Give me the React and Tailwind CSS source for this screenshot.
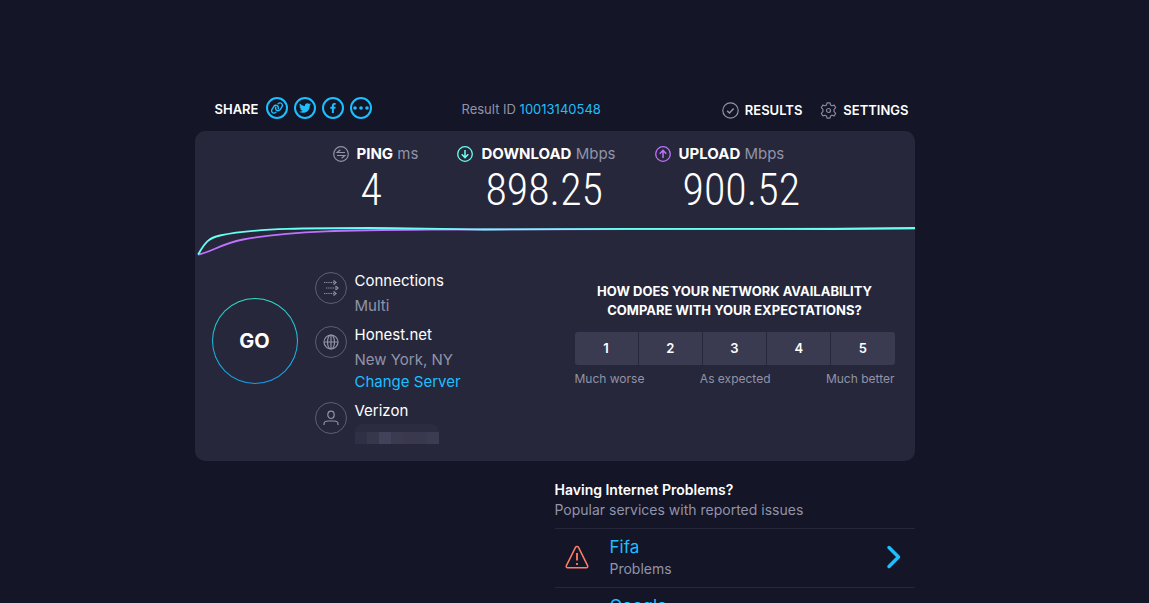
import React from 'react';
import { FaTwitter, FaFacebookF } from 'react-icons/fa';
import { FaLink } from 'react-icons/fa6';

const ratings = [1, 2, 3, 4, 5];

const CheckIcon = () => (
    <svg viewBox="0 0 17 17" className="size-[17px]" fill="none" stroke="#9193a8" strokeWidth="1.2">
        <circle cx="8.5" cy="8.5" r="7.7" />
        <path d="M5.2 8.9l2.3 2.1 4.2-4.6" strokeWidth="1.5" />
    </svg>
);

const GearIcon = () => (
    <svg viewBox="0 0 17 17" className="size-[17px]" fill="none" stroke="#85879d" strokeWidth="1.2" strokeLinejoin="round">
        <circle cx="8.5" cy="8.5" r="2" />
        <path d="M7 .8h3l.5 2.1 1.5.9 2.2-.7 1.5 2.6-1.6 1.6v2.4l1.6 1.6-1.5 2.6-2.2-.7-1.5.9-.5 2.1H7l-.5-2.1-1.5-.9-2.2.7-1.5-2.6 1.6-1.6V7.3L1.3 5.700l1.5-2.6 2.2.7 1.5-.9z" />
    </svg>
);

const PingIcon = () => (
    <svg viewBox="0 0 16 16" className="size-4" fill="none" stroke="#9193a8" strokeWidth="1.2">
        <circle cx="8" cy="8" r="7.3" />
        <path d="M12 6.5H4.2l3.2-2.8M4 9.5h7.8l-3.2 2.8" />
    </svg>
);

const ArrowIcon = ({ up }) => (
    <svg viewBox="0 0 16 16" className="size-4" fill="none" stroke={up ? '#bf71ff' : '#6afff3'} strokeWidth="1.3">
        <circle cx="8" cy="8" r="7.3" />
        <path d={up ? 'M8 12V4.5M4.700 7.700L8 4.400l3.300 3.300' : 'M8 4v7.500M4.700 8.300L8 11.600l3.300-3.300'} strokeWidth="1.5" />
    </svg>
);

const ConnectionsIcon = () => (
    <svg viewBox="0 0 16 16" className="size-4" fill="none" stroke="#9193a8" strokeWidth="1.2">
        <path d="M1 2.500h10M3 8h10M1 13.500h10" strokeDasharray="1.300 .9" />
        <path d="M10.500.5l2.500 2-2.500 2M12.500 6L15 8l-2.500 2M10.500 11.500l2.500 2-2.500 2" />
    </svg>
);

const GlobeIcon = () => (
    <svg viewBox="0 0 16 16" className="size-4" fill="none" stroke="#9193a8" strokeWidth="1.2">
        <circle cx="8" cy="8" r="7" />
        <ellipse cx="8" cy="8" rx="3.500" ry="7" />
        <path d="M8 1v14M1 8h14" />
    </svg>
);

const UserIcon = () => (
    <svg viewBox="0 0 16 16" className="size-4" fill="none" stroke="#9193a8" strokeWidth="1.2">
        <ellipse cx="8" cy="4.800" rx="3.200" ry="3.700" />
        <path d="M1 15v-1c0-2 1.800-3 4-3h6c2.200 0 4 1 4 3v1" />
    </svg>
);

const MoreIcon = () => (
    <svg viewBox="0 0 16 4" className="h-1 w-4" fill="currentColor">
        <circle cx="2" cy="2" r="1.800" />
        <circle cx="8" cy="2" r="1.800" />
        <circle cx="14" cy="2" r="1.800" />
    </svg>
);

const WarningIcon = () => (
    <svg viewBox="0 0 24 24" className="size-6" fill="none" stroke="#ff7e66" strokeWidth="1.500">
        <path d="M10.600 2.200c.6-1.100 2.200-1.100 2.800 0l9.200 18.500c.5 1-.1 2-1.200 2H2.600c-1.100 0-1.700-1-1.200-2z" />
        <path d="M12 8v7.500M12 18v2" strokeWidth="1.800" />
    </svg>
);

const ShareLink = ({ label, children }) => (
    <a
        href="#"
        aria-label={label}
        className="flex size-[22px] items-center justify-center rounded-full border-2 border-[#1cbfff] text-[#1cbfff]"
    >
        {children}
    </a>
);

const Stat = ({ icon, name, unit, value }) => (
    <div className="flex gap-2">
        <div className="pt-0.5">{icon}</div>
        <div>
            <div className="text-[15px] leading-5 whitespace-nowrap text-[#9193a8]">
                <span className="font-bold text-white">{name}</span> {unit}
            </div>
            <div className="pl-1 font-['Roboto_Condensed','Liberation_Sans_Narrow',sans-serif] text-[44px] leading-[52px] font-light">
                {value}
            </div>
        </div>
    </div>
);

const Detail = ({ icon, title, children }) => (
    <div className="flex gap-2">
        <div className="mt-px flex size-8 shrink-0 items-center justify-center rounded-full border border-[#5c5e73]">
            {icon}
        </div>
        <div className="text-[15px] leading-5">
            <div>{title}</div>
            {children}
        </div>
    </div>
);

const Problem = ({ name }) => (
    <a href="#" className="flex h-[59px] items-center border-t border-[#26273b] pr-3 pb-0.5 pl-2.5">
        <WarningIcon />
        <div className="ml-[21px] flex-1">
            <div className="text-[17px] leading-6 text-[#1cbfff]">{name}</div>
            <div className="text-sm text-[#9193a8]">Problems</div>
        </div>
        <svg viewBox="0 0 18 24" className="h-6 w-[18px]" fill="none" stroke="#1cbfff" strokeWidth="3.500" strokeLinecap="round" strokeLinejoin="round">
            <path d="M4 2.500L13.500 12 4 21.500" />
        </svg>
    </a>
);

const App = () => {
    return (
        <div className="h-screen overflow-hidden bg-[#141526] pt-[97px] pr-10 font-['Inter',sans-serif] text-white">
            <main className="mx-auto w-full max-w-[720px]">
                {/* Share and navigation */}
                <header className="flex h-[34px] items-start">
                    <div className="flex w-[267px] gap-2 pl-5">
                        <span className="pt-0.5 text-[13px] leading-5 font-semibold">SHARE</span>
                        <div className="flex gap-1.5">
                            <ShareLink label="Copy link"><FaLink className="size-3.5 -rotate-12" /></ShareLink>
                            <ShareLink label="Twitter"><FaTwitter className="size-3" /></ShareLink>
                            <ShareLink label="Facebook"><FaFacebookF className="size-2.5" /></ShareLink>
                            <ShareLink label="More"><MoreIcon /></ShareLink>
                        </div>
                    </div>
                    <div className="pt-0.5 text-[13px] leading-5 text-[#9193a8]">
                        Result ID <a href="#" className="text-[#1cbfff]">10013140548</a>
                    </div>
                    <nav className="ml-auto flex gap-[18px] pt-[3px] pr-1.5 text-[13px] leading-5 font-semibold">
                        <a href="#" className="flex items-center gap-1.5"><CheckIcon />RESULTS</a>
                        <a href="#" className="flex items-center gap-1.5"><GearIcon />SETTINGS</a>
                    </nav>
                </header>

                <section className="rounded-[10px] bg-[#26273b] pt-[13px] pb-[17px]">
                    {/* Speeds */}
                    <div className="flex gap-[39px] pl-[138px]">
                        <Stat icon={<PingIcon />} name="PING" unit="ms" value="4" />
                        <Stat icon={<ArrowIcon />} name="DOWNLOAD" unit="Mbps" value="898.25" />
                        <Stat icon={<ArrowIcon up />} name="UPLOAD" unit="Mbps" value="900.52" />
                    </div>

                    <svg viewBox="0 0 720 40" preserveAspectRatio="none" className="block h-10 w-full" fill="none" strokeWidth="1.800">
                        <path d="M3 38.500C15 37 25 28 48 23.500C95 14.500 160 14 235 13.500L720 12.500" stroke="#bf71ff" />
                        <path d="M3 38.500C9 29 12 22 25 19.500C60 12 120 12 175 12C220 12 240 13.500 290 13.500C400 12.500 560 13 640 13L720 12" stroke="#6afff3" />
                    </svg>

                    {/* Server and survey */}
                    <div className="flex justify-between pt-[15px] pr-5 pl-[17px]">
                        <div className="flex gap-[17px]">
                            <button type="button" className="mt-[27px] size-[86px] rounded-full bg-linear-to-b from-[#2fe0c8] to-[#1b9be8] p-px">
                                <span className="flex size-full items-center justify-center rounded-full bg-[#26273b] text-xl font-bold">
                                    GO
                                </span>
                            </button>
                            <div className="flex flex-col gap-[9px]">
                                <Detail icon={<ConnectionsIcon />} title="Connections">
                                    <div className="mt-[5px] text-[#9193a8]">Multi</div>
                                </Detail>
                                <Detail icon={<GlobeIcon />} title="Honest.net">
                                    <div className="mt-[5px] text-[#9193a8]">New York, NY</div>
                                    <a href="#" className="mt-0.5 block text-[#1cbfff]">Change Server</a>
                                </Detail>
                                <Detail icon={<UserIcon />} title="Verizon">
                                    <div className="mt-[3px] h-2 w-[84px] rounded-t-lg bg-[#2b2c40]" />
                                    <div className="flex h-3 w-[84px]">
                                        <div className="flex-1 bg-[#2f3045]" />
                                        <div className="flex-1 bg-[#37374c]" />
                                        <div className="flex-1 bg-[#42425a]" />
                                        <div className="flex-1 bg-[#3a3b51]" />
                                        <div className="flex-1 bg-[#3a384d]" />
                                        <div className="flex-1 bg-[#38394e]" />
                                        <div className="flex-1 bg-[#3b3c52]" />
                                    </div>
                                </Detail>
                            </div>
                        </div>

                        <div className="w-80 pt-[11px]">
                            <h2 className="text-center text-[13px] leading-[19px] font-bold">
                                HOW DOES YOUR NETWORK AVAILABILITY<br />COMPARE WITH YOUR EXPECTATIONS?
                            </h2>
                            <div className="mt-3 flex gap-px overflow-hidden rounded-[3px]">
                                {ratings.map((rating) => (
                                    <button key={rating} type="button" className="h-[33px] flex-1 bg-[#3a3b51] text-[13px] font-semibold">
                                        {rating}
                                    </button>
                                ))}
                            </div>
                            <div className="mt-1.5 flex justify-between text-xs text-[#9193a8]">
                                <span>Much worse</span>
                                <span>As expected</span>
                                <span>Much better</span>
                            </div>
                        </div>
                    </div>
                </section>

                {/* Reported issues */}
                <section className="ml-auto w-1/2 pt-[19px]">
                    <h3 className="text-sm font-semibold">Having Internet Problems?</h3>
                    <p className="mb-2 text-sm text-[#9193a8]">Popular services with reported issues</p>
                    <Problem name="Fifa" />
                    <Problem name="Google" />
                </section>
            </main>
        </div>
    );
};

export default App;
